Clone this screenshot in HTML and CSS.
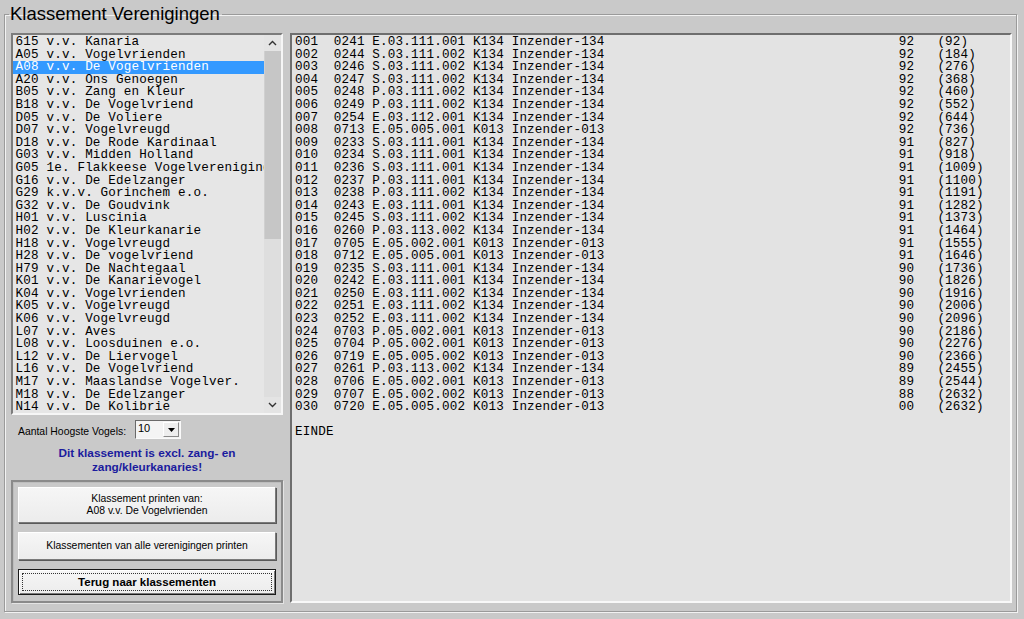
FILE: index.html
```html
<!DOCTYPE html>
<html lang="nl">
<head>
<meta charset="utf-8">
<title>Klassement Verenigingen</title>
<link rel="stylesheet" href="styles.css">
</head>
<body>
<fieldset class="group">
  <legend>Klassement Verenigingen</legend>
  <div class="leftcol">
    <div class="listbox">
      <div class="items">
        <div class="it">615 v.v. Kanaria</div>
        <div class="it">A05 v.v. Vogelvrienden</div>
        <div class="it sel">A08 v.v. De Vogelvrienden</div>
        <div class="it">A20 v.v. Ons Genoegen</div>
        <div class="it">B05 v.v. Zang en Kleur</div>
        <div class="it">B18 v.v. De Vogelvriend</div>
        <div class="it">D05 v.v. De Voliere</div>
        <div class="it">D07 v.v. Vogelvreugd</div>
        <div class="it">D18 v.v. De Rode Kardinaal</div>
        <div class="it">G03 v.v. Midden Holland</div>
        <div class="it">G05 1e. Flakkeese Vogelvereniging</div>
        <div class="it">G16 v.v. De Edelzanger</div>
        <div class="it">G29 k.v.v. Gorinchem e.o.</div>
        <div class="it">G32 v.v. De Goudvink</div>
        <div class="it">H01 v.v. Luscinia</div>
        <div class="it">H02 v.v. De Kleurkanarie</div>
        <div class="it">H18 v.v. Vogelvreugd</div>
        <div class="it">H28 v.v. De vogelvriend</div>
        <div class="it">H79 v.v. De Nachtegaal</div>
        <div class="it">K01 v.v. De Kanarievogel</div>
        <div class="it">K04 v.v. Vogelvrienden</div>
        <div class="it">K05 v.v. Vogelvreugd</div>
        <div class="it">K06 v.v. Vogelvreugd</div>
        <div class="it">L07 v.v. Aves</div>
        <div class="it">L08 v.v. Loosduinen e.o.</div>
        <div class="it">L12 v.v. De Liervogel</div>
        <div class="it">L16 v.v. De Vogelvriend</div>
        <div class="it">M17 v.v. Maaslandse Vogelver.</div>
        <div class="it">M18 v.v. De Edelzanger</div>
        <div class="it">N14 v.v. De Kolibrie</div>
      </div>
      <div class="vscroll">
        <div class="sbtn"><svg width="9" height="6" viewBox="0 0 9 6"><polyline points="1,5 4.5,1.5 8,5" fill="none" stroke="#333" stroke-width="1.4"/></svg></div>
        <div class="thumb"></div>
        <div class="track"></div>
        <div class="sbtn"><svg width="9" height="6" viewBox="0 0 9 6"><polyline points="1,1 4.5,4.5 8,1" fill="none" stroke="#333" stroke-width="1.4"/></svg></div>
      </div>
    </div>
    <div class="aantal">
      <span class="lbl">Aantal Hoogste Vogels:</span>
      <div class="combo">
        <span class="cval">10</span>
        <span class="cbtn"><svg width="7" height="4" viewBox="0 0 7 4"><polygon points="0,0 7,0 3.5,4" fill="#000"/></svg></span>
      </div>
    </div>
    <p class="note">Dit klassement is excl. zang- en<br>zang/kleurkanaries!</p>
    <div class="panel">
      <button class="btn b1">Klassement printen van:<br>A08 v.v. De Vogelvrienden</button>
      <button class="btn b2">Klassementen van alle verenigingen printen</button>
      <button class="btn b3"><span class="focus">Terug naar klassementen</span></button>
    </div>
  </div>
  <div class="output">
    <div class="r"><span>001  0241 E.03.111.001 K134 Inzender-134</span><span>92</span><span>(92)</span></div>
    <div class="r"><span>002  0244 S.03.111.002 K134 Inzender-134</span><span>92</span><span>(184)</span></div>
    <div class="r"><span>003  0246 S.03.111.002 K134 Inzender-134</span><span>92</span><span>(276)</span></div>
    <div class="r"><span>004  0247 S.03.111.002 K134 Inzender-134</span><span>92</span><span>(368)</span></div>
    <div class="r"><span>005  0248 P.03.111.002 K134 Inzender-134</span><span>92</span><span>(460)</span></div>
    <div class="r"><span>006  0249 P.03.111.002 K134 Inzender-134</span><span>92</span><span>(552)</span></div>
    <div class="r"><span>007  0254 E.03.112.001 K134 Inzender-134</span><span>92</span><span>(644)</span></div>
    <div class="r"><span>008  0713 E.05.005.001 K013 Inzender-013</span><span>92</span><span>(736)</span></div>
    <div class="r"><span>009  0233 S.03.111.001 K134 Inzender-134</span><span>91</span><span>(827)</span></div>
    <div class="r"><span>010  0234 S.03.111.001 K134 Inzender-134</span><span>91</span><span>(918)</span></div>
    <div class="r"><span>011  0236 S.03.111.001 K134 Inzender-134</span><span>91</span><span>(1009)</span></div>
    <div class="r"><span>012  0237 P.03.111.001 K134 Inzender-134</span><span>91</span><span>(1100)</span></div>
    <div class="r"><span>013  0238 P.03.111.002 K134 Inzender-134</span><span>91</span><span>(1191)</span></div>
    <div class="r"><span>014  0243 E.03.111.001 K134 Inzender-134</span><span>91</span><span>(1282)</span></div>
    <div class="r"><span>015  0245 S.03.111.002 K134 Inzender-134</span><span>91</span><span>(1373)</span></div>
    <div class="r"><span>016  0260 P.03.113.002 K134 Inzender-134</span><span>91</span><span>(1464)</span></div>
    <div class="r"><span>017  0705 E.05.002.001 K013 Inzender-013</span><span>91</span><span>(1555)</span></div>
    <div class="r"><span>018  0712 E.05.005.001 K013 Inzender-013</span><span>91</span><span>(1646)</span></div>
    <div class="r"><span>019  0235 S.03.111.001 K134 Inzender-134</span><span>90</span><span>(1736)</span></div>
    <div class="r"><span>020  0242 E.03.111.001 K134 Inzender-134</span><span>90</span><span>(1826)</span></div>
    <div class="r"><span>021  0250 E.03.111.002 K134 Inzender-134</span><span>90</span><span>(1916)</span></div>
    <div class="r"><span>022  0251 E.03.111.002 K134 Inzender-134</span><span>90</span><span>(2006)</span></div>
    <div class="r"><span>023  0252 E.03.111.002 K134 Inzender-134</span><span>90</span><span>(2096)</span></div>
    <div class="r"><span>024  0703 P.05.002.001 K013 Inzender-013</span><span>90</span><span>(2186)</span></div>
    <div class="r"><span>025  0704 P.05.002.001 K013 Inzender-013</span><span>90</span><span>(2276)</span></div>
    <div class="r"><span>026  0719 E.05.005.002 K013 Inzender-013</span><span>90</span><span>(2366)</span></div>
    <div class="r"><span>027  0261 P.03.113.002 K134 Inzender-134</span><span>89</span><span>(2455)</span></div>
    <div class="r"><span>028  0706 E.05.002.001 K013 Inzender-013</span><span>89</span><span>(2544)</span></div>
    <div class="r"><span>029  0707 E.05.002.002 K013 Inzender-013</span><span>88</span><span>(2632)</span></div>
    <div class="r"><span>030  0720 E.05.005.002 K013 Inzender-013</span><span>00</span><span>(2632)</span></div>
    <div class="r blank"></div>
    <div class="r"><span>EINDE</span></div>
  </div>
</fieldset>
</body>
</html>
```

FILE: styles.css
```css
html, body {
  margin: 0;
  padding: 0;
}
body {
  width: 1024px;
  height: 619px;
  overflow: hidden;
  background: #c9c9c9;
  padding: 4px 7px 0 4px;
  box-sizing: border-box;
  font-family: "Liberation Sans", Arial, sans-serif;
  color: #000;
}

.group {
  margin: 0;
  height: 608px;
  box-sizing: border-box;
  padding: 9px 4px 8px 6px;
  border: 1px solid #9a9a9a;
  box-shadow: inset 1px 1px 0 #f2f2f2, 1px 1px 0 #f2f2f2;
  display: flex;
  gap: 7px;
  min-width: 0;
}
.group legend {
  font-size: 18.5px;
  line-height: 20px;
  padding: 0 2px 0 1px;
  margin-left: -2px;
}

.leftcol {
  width: 272px;
  flex: none;
  display: flex;
  flex-direction: column;
}

.items, .output {
  font-family: "Liberation Mono", "Courier New", monospace;
  font-size: 12.6px;
  letter-spacing: 0.18px;
  line-height: 12.6px;
}
.it, .r span {
  white-space: pre;
}

.listbox {
  height: 383px;
  box-sizing: border-box;
  border: 2px solid;
  border-color: #7c7c7c #f6f6f6 #f6f6f6 #7c7c7c;
  background: #e6e6e6;
  display: flex;
  overflow: hidden;
}
.items {
  flex: 1;
  overflow: hidden;
  padding-top: 1px;
}
.it {
  height: 12.6px;
  padding-left: 2.5px;
  overflow: hidden;
}
.it.sel {
  background: #3399ff;
  color: #fff;
}

.vscroll {
  width: 17px;
  flex: none;
  display: flex;
  flex-direction: column;
  background: #e2e2e2;
}
.sbtn {
  height: 16px;
  display: flex;
  align-items: center;
  justify-content: center;
  background: #e4e4e4;
}
.thumb {
  height: 188px;
  background: #c6c6c6;
  border-left: 1px solid #d0d0d0;
}
.track {
  flex: 1;
  background: #dedede;
}

.aantal {
  display: flex;
  align-items: center;
  margin-top: 5px;
  height: 19px;
  padding-left: 7px;
}
.lbl {
  font-size: 10.4px;
  width: 117px;
  padding-top: 4px;
}
.combo {
  width: 46px;
  height: 19px;
  box-sizing: border-box;
  border: 1px solid;
  border-color: #6a6a6a #fafafa #fafafa #6a6a6a;
  background: #f4f4f4;
  display: flex;
  align-items: stretch;
}
.cval {
  flex: 1;
  font-size: 11px;
  line-height: 15px;
  padding-left: 2px;
}
.cbtn {
  width: 16px;
  margin: 1px;
  box-sizing: border-box;
  border: 1px solid;
  border-color: #fff #8a8a8a #8a8a8a #fff;
  background: #eeeeee;
  display: flex;
  align-items: center;
  justify-content: center;
}

.note {
  margin: 7px 0 0;
  height: 34px;
  text-align: center;
  font-size: 11.8px;
  font-weight: bold;
  line-height: 14px;
  color: #1b1b9e;
}

.panel {
  height: 123px;
  box-sizing: border-box;
  border: 2px solid #8a8a8a;
  box-shadow: inset 1px 1px 0 #bdbdbd, 1px 1px 0 #e4e4e4;
  padding: 5px 5px 0 5px;
  display: flex;
  flex-direction: column;
  gap: 9px;
}
.btn {
  display: block;
  width: 258px;
  margin: 0;
  padding: 0;
  box-sizing: border-box;
  font-family: "Liberation Sans", Arial, sans-serif;
  font-size: 10.4px;
  line-height: 12px;
  color: #000;
  background: linear-gradient(#f6f6f6, #ececec);
  border: 1px solid;
  border-color: #ffffff #7a7a7a #7a7a7a #ffffff;
  box-shadow: 1px 1px 0 #5a5a5a;
  text-align: center;
}
.b1 { height: 36px; }
.b2 { height: 28px; }
.b3 {
  height: 26px;
  border: 1px solid #1a1a1a;
  box-shadow: inset 1px 1px 0 #ffffff, inset -1px -1px 0 #7a7a7a;
  padding: 3px;
}
.focus {
  display: block;
  height: 100%;
  box-sizing: border-box;
  border: 1px dotted #333;
  font-size: 11.5px;
  font-weight: bold;
  line-height: 16px;
}

.output {
  flex: 1;
  min-width: 0;
  height: 570px;
  box-sizing: border-box;
  border: 2px solid;
  border-color: #6e6e6e #f8f8f8 #f8f8f8 #6e6e6e;
  background: #e3e3e3;
  padding: 1px 0 0 3px;
  overflow: hidden;
}
.r {
  display: grid;
  grid-template-columns: 603.7px 38.7px auto;
  height: 12.6px;
}
```
